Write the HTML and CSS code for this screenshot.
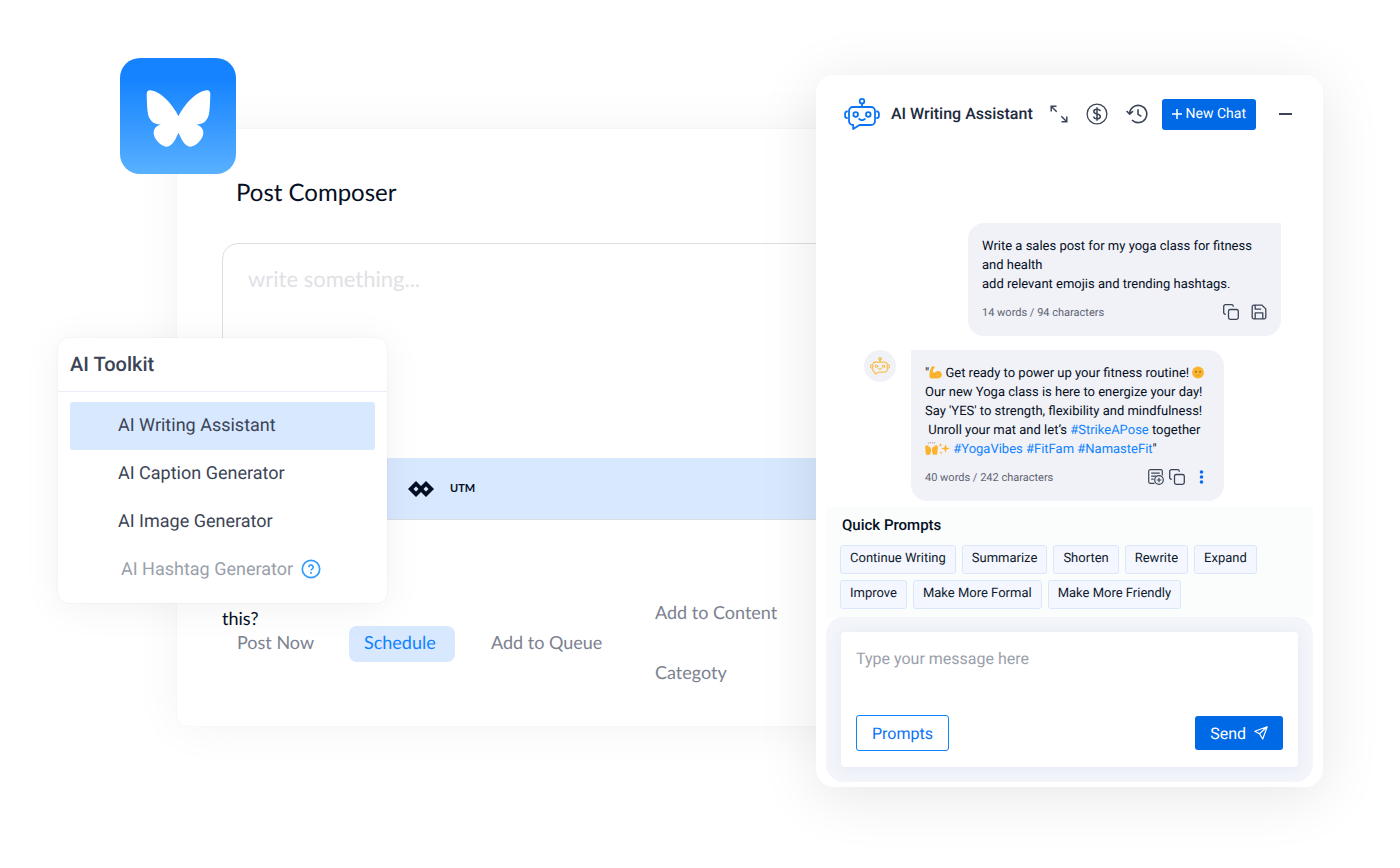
FILE: index.html
```html
<!DOCTYPE html>
<html lang="en">
<head>
    <meta charset="UTF-8">
    <meta name="viewport" content="width=device-width, initial-scale=1.0">
    <title>AI Writing Assistant</title>
    <link rel="stylesheet" href="styles.css">
</head>
<body>

<!-- shared icons -->
<svg class="sprite" aria-hidden="true">
    <symbol id="robot" viewBox="0 0 36 32">
        <g fill="none" stroke="currentColor" stroke-width="1.8" stroke-linejoin="round" stroke-linecap="round">
            <circle cx="18" cy="3.2" r="2.3"/>
            <path d="M18 5.6V9M9 9h18a4 4 0 0 1 4 4v10a4 4 0 0 1-4 4H15.500L9.200 31v-4A4 4 0 0 1 5 23V13a4 4 0 0 1 4-4z"/>
            <circle cx="11.700" cy="16.500" r="2.300"/>
            <circle cx="24.300" cy="16.500" r="2.300"/>
            <path d="M15.200 21q2.800 2.400 5.600 0M3 13.500a1.800 1.800 0 0 0-1.900 1.900v2.800A1.800 1.800 0 0 0 3 20M33 13.500a1.800 1.800 0 0 1 1.900 1.900v2.800A1.800 1.800 0 0 1 33 20"/>
        </g>
    </symbol>
    <symbol id="copy" viewBox="0 0 16 16">
        <g fill="none" stroke="currentColor" stroke-width="1.300">
            <rect x="5.500" y="5.500" width="9.800" height="9.800" rx="1.800"/>
            <path d="M2.800 10.300h-.3A1.800 1.800 0 0 1 .7 8.500v-6A1.800 1.800 0 0 1 2.500.7h6a1.800 1.800 0 0 1 1.800 1.800v.3"/>
        </g>
    </symbol>
</svg>

<main class="stage">

    <section class="composer">
        <h1>Post Composer</h1>
        <div class="editor">
            <textarea aria-label="Post text" placeholder="write something..."></textarea>
            <div class="utm-bar">
                <svg width="26" height="16" viewBox="0 0 26 16" aria-hidden="true">
                    <path fill="#050f24" fill-rule="evenodd" d="M8 0l5 5 5-5 8 8-8 8-5-5-5 5-8-8zM8 5.500L5.500 8 8 10.500 10.500 8zM18 5.500L15.500 8l2.500 2.500L20.500 8z"/>
                </svg>
                <span>UTM</span>
            </div>
        </div>
        <div class="publish">
            <div>
                <p class="question">this?</p>
                <div class="options">
                    <button type="button">Post Now</button>
                    <button type="button" class="active">Schedule</button>
                    <button type="button">Add to Queue</button>
                </div>
            </div>
            <button type="button" class="category">Add to Content Categoty</button>
        </div>

        <div class="bluesky">
            <svg width="65" height="57" viewBox="0 0 194 172" role="img" aria-label="Bluesky">
                <path fill="#fff" d="M97 79C80 45 45 5 13 1 4 0 0 6 1 16c1 24 1 59 9 70 8 14 20 18 36 18-14 2-24 11-24 26s20 40 38 41c18 1 30-26 37-42 7 16 19 43 37 42 18-1 38-26 38-41s-10-24-24-26c16 0 28-4 36-18 8-11 8-46 9-70 1-10-3-16-12-15-32 4-67 44-84 78z"/>
            </svg>
        </div>

        <aside class="toolkit">
            <h2>AI Toolkit</h2>
            <nav>
                <a href="#" class="selected">AI Writing Assistant</a>
                <a href="#">AI Caption Generator</a>
                <a href="#">AI Image Generator</a>
                <a href="#" class="locked">AI Hashtag Generator
                    <svg width="20" height="20" viewBox="0 0 20 20" fill="none" stroke="#339cff" aria-hidden="true">
                        <circle cx="10" cy="10" r="8.700" stroke-width="1.700"/>
                        <path d="M7.800 8.200a2.200 2.200 0 1 1 3.500 1.700c-.9.600-1.300.9-1.300 1.700" stroke-width="1.700"/>
                        <path d="M10 13v1.700" stroke-width="1.800"/>
                    </svg>
                </a>
            </nav>
        </aside>
    </section>

    <section class="assistant">
        <header>
            <svg class="logo" width="36" height="32"><use href="#robot"/></svg>
            <h2>AI Writing Assistant</h2>
            <button type="button" class="icon" aria-label="Expand">
                <svg width="18" height="18" viewBox="0 0 18 18" fill="none" stroke="currentColor" stroke-width="1.500">
                    <path d="M1.200 6.500V1.200h5.300M1.200 1.200l5.500 5.500M16.800 11.500v5.300h-5.300M16.800 16.800l-5.500-5.500"/>
                </svg>
            </button>
            <button type="button" class="icon" aria-label="Credits">
                <svg width="22" height="22" viewBox="0 0 22 22" fill="none" stroke="currentColor" stroke-width="1.300">
                    <circle cx="11" cy="11" r="9.900"/>
                    <path d="M14.200 8.200C14 6.800 12.800 6.200 11 6.200c-2 0-3.200.9-3.200 2.300 0 3.400 6.500 1.500 6.500 4.900 0 1.500-1.300 2.400-3.300 2.400s-3.200-.8-3.400-2.300M11 4.200v13.600" stroke-width="1.500"/>
                </svg>
            </button>
            <button type="button" class="icon history" aria-label="History">
                <svg width="22" height="20" viewBox="0 0 22 20" fill="none" stroke="currentColor" stroke-width="1.600">
                    <path d="M3.600 9.500A8.600 8.600 0 1 1 6 16M.6 7l3.100 3.200L7 7.200M12 5.200v5.200l3.400 2"/>
                </svg>
            </button>
            <button type="button" class="new-chat">
                <svg width="10" height="10" viewBox="0 0 10 10" stroke="#fff" stroke-width="1.500" aria-hidden="true"><path d="M5 0v10M0 5h10"/></svg>
                New Chat
            </button>
            <button type="button" class="icon minimize" aria-label="Minimize">
                <svg width="13" height="2" viewBox="0 0 13 2"><path fill="currentColor" d="M0 0h13v2H0z"/></svg>
            </button>
        </header>

        <div class="chat">
            <article class="bubble mine">
                <p>Write a sales post for my yoga class for fitness and health<br>add relevant emojis and trending hashtags.</p>
                <footer>
                    <span>14 words / 94 characters</span>
                    <button type="button" class="icon" aria-label="Copy"><svg width="16" height="16"><use href="#copy"/></svg></button>
                    <button type="button" class="icon" aria-label="Save">
                        <svg width="16" height="16" viewBox="0 0 16 16" fill="none" stroke="currentColor" stroke-width="1.300" stroke-linejoin="round">
                            <path d="M2.700 1.200h8.300l3.800 3.700v8.400a1.500 1.500 0 0 1-1.500 1.500H2.700a1.500 1.500 0 0 1-1.500-1.500V2.700a1.500 1.500 0 0 1 1.500-1.500zM4.200 1.500v3.700h6M4.200 14.800V8.800h7.600v6"/>
                        </svg>
                    </button>
                </footer>
            </article>

            <div class="reply">
                <div class="avatar"><svg width="20" height="18"><use href="#robot"/></svg></div>
                <article class="bubble">
                    <p>"<svg class="emoji" width="13" height="13" viewBox="0 0 13 13" role="img" aria-label="flexed biceps"><path fill="#fbb32c" d="M2.500.8C3.500 0 5.300.2 5.600 1c.3.900-.3 1.700-1.300 1.800L3.800 5l1.500 2.500C6.400 5.400 8.600 4.700 10.600 5.300 12.500 6 13.300 8.500 12.500 10.500 11.300 13 3.500 13 1.300 12 0 11.300.3 7.800.9 4.800z"/><path d="M5.300 7.500l1.200 1.100" stroke="#e59324" fill="none"/></svg> Get ready to power up your fitness routine! <svg class="emoji" width="12" height="13" viewBox="0 0 12 13" role="img" aria-label="face"><circle cx="6" cy="6.500" r="5.900" fill="#fbb32c"/><path fill="#6e5327" d="M3.300 5h1.300v1.500H3.300zM7.400 5h1.300v1.500H7.400z"/><path fill="#dd9a35" d="M4 8.800h4v.8H4z"/></svg><br>
                    Our new Yoga class is here to energize your day!<br>
                    Say 'YES' to strength, flexibility and mindfulness!<br>
                    &nbsp;Unroll your mat and let’s <a href="#">#StrikeAPose</a> together<br>
                    <svg class="emoji" width="13" height="13" viewBox="0 0 13 13" role="img" aria-label="raised hands"><path fill="#fbb32c" d="M0 3.500l1 1.300.3-2.300 1 1.500.8-1.500.5 2.500L5 4.500 6 7v2.500l-1 3.300H1L.5 9zM13 3.500l-1 1.300-.3-2.300-1 1.500-.8-1.500-.5 2.500L8 4.500 7 7v2.500l1 3.300h4l.5-3.800z"/><path d="M3 .3l.5 1.200M5.300 0v1.400M7.700 0v1.400M10 .3l-.5 1.200" stroke="#8f8570" stroke-width=".8"/></svg><svg class="emoji" width="12" height="13" viewBox="0 0 12 13" role="img" aria-label="sparkles"><path fill="#fbb32c" d="M7.500 2l1.100 3.400L12 6.500 8.600 7.600 7.500 11 6.400 7.600 3 6.500l3.400-1.100zM2.500.8L3 2.500l1.500.5L3 3.500 2.500 5 2 3.500.5 3 2 2.500zM3 9l.4 1.400 1.400.4-1.400.4L3 12.600l-.4-1.400-1.400-.4 1.400-.4z"/></svg> <a href="#">#YogaVibes</a> <a href="#">#FitFam</a> <a href="#">#NamasteFit</a>"</p>
                    <footer>
                        <span>40 words / 242 characters</span>
                        <button type="button" class="icon" aria-label="Add to post">
                            <svg width="16" height="16" viewBox="0 0 16 16" fill="none" stroke="currentColor" stroke-width="1.200">
                                <path d="M6.500 14.400H2.300A1.600 1.600 0 0 1 .7 12.800V2.300A1.600 1.600 0 0 1 2.300.7h10.400a1.600 1.600 0 0 1 1.600 1.600v4.200M3.200 4.200h8.600M3.200 7.200h5M3.200 10.200h2.500"/>
                                <circle cx="11" cy="11" r="4.300"/>
                                <path d="M11 8.700v4.600M8.700 11h4.600"/>
                            </svg>
                        </button>
                        <button type="button" class="icon" aria-label="Copy"><svg width="16" height="16"><use href="#copy"/></svg></button>
                        <button type="button" class="icon more" aria-label="More">
                            <svg width="5" height="14" viewBox="0 0 5 14" fill="#0a6cf0"><circle cx="2.500" cy="2" r="1.800"/><circle cx="2.500" cy="7" r="1.800"/><circle cx="2.500" cy="12" r="1.800"/></svg>
                        </button>
                    </footer>
                </article>
            </div>
        </div>

        <div class="quick">
            <h3>Quick Prompts</h3>
            <div class="chips">
                <button type="button">Continue Writing</button>
                <button type="button">Summarize</button>
                <button type="button">Shorten</button>
                <button type="button">Rewrite</button>
                <button type="button">Expand</button>
                <button type="button">Improve</button>
                <button type="button">Make More Formal</button>
                <button type="button">Make More Friendly</button>
            </div>
        </div>

        <form class="message">
            <div class="message-box">
                <textarea aria-label="Message" placeholder="Type your message here"></textarea>
                <div class="actions">
                    <button type="button" class="prompts">Prompts</button>
                    <button type="button" class="send">Send
                        <svg width="14" height="14" viewBox="0 0 14 14" fill="none" stroke="#fff" stroke-width="1.200" stroke-linejoin="round" aria-hidden="true"><path d="M13.200.8L.8 5.300l4.700 2.500 3.200 5.200zM13.200.8L5.500 7.800"/></svg>
                    </button>
                </div>
            </div>
        </form>
    </section>

</main>
</body>
</html>
```
FILE: styles.css
```css
*{
    margin: 0;
    padding: 0;
    box-sizing: border-box;
}
body{
    background: #fff;
    color: #050f24;
    font-family: Roboto, "Liberation Sans", sans-serif;
    text-rendering: geometricPrecision;
}
button, textarea{
    font: inherit;
    text-rendering: inherit;
    border: 0;
    outline: 0;
    background: none;
}
button{
    cursor: pointer;
}
textarea{
    display: block;
    width: 100%;
    resize: none;
}
a{
    color: #1083fe;
    text-decoration: none;
}
svg{
    flex-shrink: 0;
}
.sprite{
    position: absolute;
    width: 0;
    height: 0;
}

/* composer and assistant share one row, the assistant lies over the composer */
.stage{
    display: grid;
    grid-template-columns: 119px minmax(0, 1fr) 507px;
    align-items: start;
    padding: 75px 77px 81px 58px;
}
.composer{
    grid-column: 2 / 4;
    grid-row: 1;
    position: relative;
    margin: 54px 60px 0 0;
    padding: 49px 45px 24px;
    background: #fff;
    border-radius: 12px;
    box-shadow: 0 0 50px rgba(0, 0, 0, .05), 0 0 2px rgba(0, 0, 0, .06);
    font-family: Lato, "Open Sans", sans-serif;
}
.composer h1{
    padding-left: 14px;
    font-size: 24px;
    line-height: 30px;
    font-weight: 400;
}
.editor{
    margin-top: 35px;
    border: 1px solid #dcdee2;
    border-radius: 16px;
    overflow: hidden;
}
.editor textarea{
    height: 214px;
    padding: 22px 25px;
    font-size: 22px;
    line-height: 26px;
}
.editor textarea::placeholder{
    color: #dfe1e5;
}
.utm-bar{
    display: flex;
    align-items: center;
    gap: 16px;
    height: 61px;
    padding-left: 185px;
    background: #d7e8ff;
    font-size: 11px;
    font-weight: 700;
}
.publish{
    display: flex;
    gap: 21px;
    margin-top: 62px;
}
.question{
    padding-top: 28px;
    font-size: 18px;
    line-height: 16px;
}
.options{
    display: grid;
    grid-template-columns: 106px 106px 143px;
    gap: 21px;
}
.publish button{
    height: 36px;
    padding: 0 15px 4px;
    border-radius: 8px;
    color: #7c8290;
    font-size: 18px;
    text-align: left;
    white-space: nowrap;
}
.publish .active{
    background: #d7e8ff;
    color: #1083fe;
}
.publish .category{
    width: 155px;
    height: 120px;
    padding: 0 15px;
    line-height: 60px;
    white-space: normal;
}

.bluesky{
    position: absolute;
    top: -71px;
    left: -57px;
    display: flex;
    align-items: center;
    justify-content: center;
    width: 116px;
    height: 116px;
    padding-top: 4px;
    border-radius: 20px;
    background: linear-gradient(#1583ff 18%, #59b0ff);
}

.toolkit{
    position: absolute;
    top: 209px;
    left: -119px;
    width: 329px;
    background: #fff;
    border-radius: 10px;
    box-shadow: 0 4px 40px rgba(0, 0, 0, .06), 0 0 2px rgba(0, 0, 0, .08);
    font-family: Roboto, "Liberation Sans", sans-serif;
    color: #3b4456;
}
.toolkit h2{
    padding: 0 12px;
    border-bottom: 1px solid #e9edf6;
    font-size: 20px;
    line-height: 53px;
    font-weight: 500;
}
.toolkit nav{
    padding: 10px 12px 9px;
}
.toolkit a{
    display: flex;
    align-items: center;
    gap: 8px;
    height: 48px;
    padding: 0 0 2px 48px;
    border-radius: 3px;
    color: #3b4456;
    font-size: 18px;
}
.toolkit .selected{
    background: #d7e8ff;
}
.toolkit .locked{
    padding-left: 51px;
    color: #9a9fab;
}

.assistant{
    grid-column: 3;
    grid-row: 1;
    z-index: 1;
    padding-bottom: 5px;
    background: #fff;
    border-radius: 18px;
    box-shadow: 0 8px 60px rgba(0, 0, 0, .1);
}
.assistant header{
    display: flex;
    align-items: center;
    padding: 23px 31px 0 28px;
}
.icon{
    display: flex;
    color: #3b4456;
}
.logo{
    color: #0a74f5;
}
.assistant h2{
    margin: 0 auto 0 11px;
    color: #212b3d;
    font-size: 16px;
    line-height: 20px;
    font-weight: 500;
}
.assistant header .icon{
    margin-right: 18px;
}
.assistant header .history{
    margin-right: 14px;
}
.assistant header .minimize{
    margin: 0 0 0 23px;
}
.new-chat{
    display: flex;
    align-items: center;
    gap: 4px;
    height: 31px;
    padding: 0 10px;
    border-radius: 3px;
    background: #0069e6;
    color: #fff;
    font-size: 14px;
    white-space: nowrap;
}
.chat{
    padding: 93px 42px 6px 48px;
}
.bubble{
    width: 313px;
    padding: 14px;
    background: #f1f2f8;
    border-radius: 0 16px 16px 16px;
    font-size: 13px;
    line-height: 19px;
}
.bubble.mine{
    margin: 0 0 14px auto;
    border-radius: 16px 0 16px 16px;
}
.bubble footer{
    display: flex;
    align-items: center;
    height: 20px;
    margin-top: 8px;
    color: #5d6471;
    font-size: 11px;
}
.bubble footer span{
    margin-right: auto;
}
.mine .icon{
    margin-left: 12px;
}
.reply{
    display: flex;
    gap: 15px;
}
.reply .icon{
    margin-left: 5px;
}
.reply .more{
    margin: 0 6px 0 14px;
}
.emoji{
    vertical-align: -2px;
}
.avatar{
    display: flex;
    align-items: center;
    justify-content: center;
    width: 32px;
    height: 32px;
    border-radius: 50%;
    background: #f1f2f8;
    color: #fbb32c;
}
.quick{
    margin: 0 10px;
    padding: 8px 14px;
    background: #fbfdfd;
}
.quick h3{
    padding-left: 2px;
    font-size: 15px;
    line-height: 20px;
    font-weight: 500;
}
.chips{
    display: flex;
    flex-wrap: wrap;
    gap: 6px;
    margin-top: 10px;
}
.chips button{
    height: 29px;
    padding: 0 9px 2px;
    border: 1px solid #d9e7fb;
    border-radius: 3px;
    background: #f4f7ff;
    color: #111a2d;
    font-size: 13px;
}
.message{
    margin: 0 10px;
    padding: 15px;
    border-radius: 18px;
    background: #f3f5fb;
}
.message-box{
    padding: 16px 15px;
    background: #fff;
    border-radius: 4px;
    box-shadow: 0 2px 14px rgba(90, 100, 150, .08);
}
.message-box textarea{
    height: 67px;
    font-size: 16px;
    line-height: 21px;
}
.message-box textarea::placeholder{
    color: #9a9fab;
}
.actions{
    display: flex;
    align-items: center;
    justify-content: space-between;
}
.actions button{
    display: flex;
    align-items: center;
    gap: 8px;
    height: 36px;
    padding: 0 15px;
    border-radius: 3px;
    font-size: 16px;
}
.actions .prompts{
    border: 1px solid #1083fe;
    color: #0a74f5;
}
.actions .send{
    height: 34px;
    background: #0069e6;
    color: #fff;
}
```
